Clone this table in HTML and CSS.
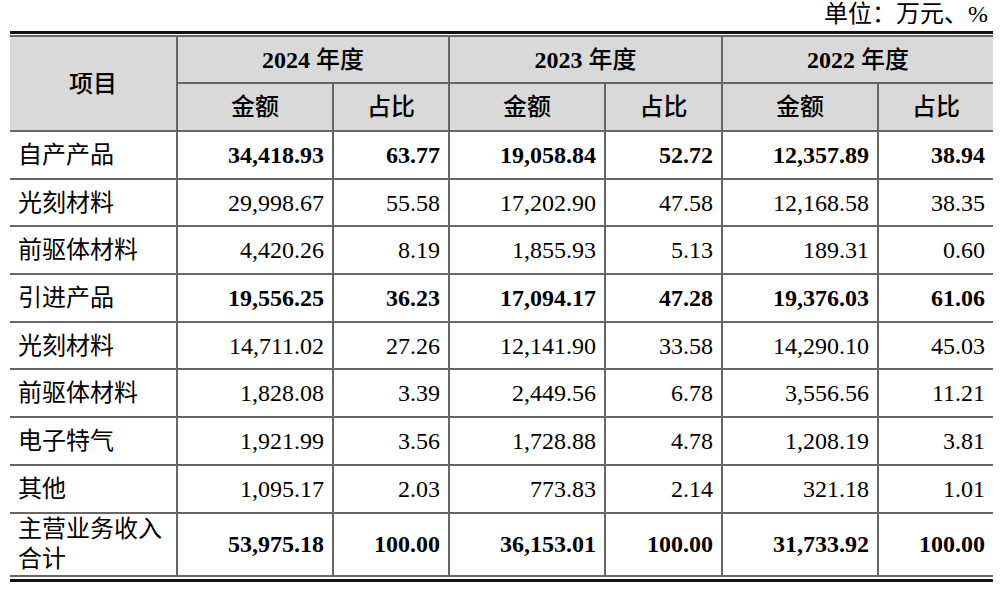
FILE: index.html
```html
<!DOCTYPE html>
<html lang="zh">
<head>
<meta charset="utf-8">
<link rel="stylesheet" href="styles.css">
</head>
<body>
<div class="page">
  <div class="unit">单位：万元、%</div>
  <div class="frame">
    <table class="data">
      <colgroup>
        <col class="c-item"><col class="c-amt"><col class="c-pct"><col class="c-amt"><col class="c-pct2"><col class="c-amt"><col class="c-pct3">
      </colgroup>
      <thead>
        <tr class="h1">
          <th rowspan="2"><span class="cj">项目</span></th>
          <th colspan="2">2024 <span class="cj">年度</span></th>
          <th colspan="2">2023 <span class="cj">年度</span></th>
          <th colspan="2">2022 <span class="cj">年度</span></th>
        </tr>
        <tr class="h2">
          <th><span class="cj">金额</span></th><th><span class="cj">占比</span></th>
          <th><span class="cj">金额</span></th><th><span class="cj">占比</span></th>
          <th><span class="cj">金额</span></th><th><span class="cj">占比</span></th>
        </tr>
      </thead>
      <tbody>
        <tr class="b">
          <td class="lbl">自产产品</td><td>34,418.93</td><td>63.77</td><td>19,058.84</td><td>52.72</td><td>12,357.89</td><td>38.94</td>
        </tr>
        <tr>
          <td class="lbl">光刻材料</td><td>29,998.67</td><td>55.58</td><td>17,202.90</td><td>47.58</td><td>12,168.58</td><td>38.35</td>
        </tr>
        <tr>
          <td class="lbl">前驱体材料</td><td>4,420.26</td><td>8.19</td><td>1,855.93</td><td>5.13</td><td>189.31</td><td>0.60</td>
        </tr>
        <tr class="b">
          <td class="lbl">引进产品</td><td>19,556.25</td><td>36.23</td><td>17,094.17</td><td>47.28</td><td>19,376.03</td><td>61.06</td>
        </tr>
        <tr>
          <td class="lbl">光刻材料</td><td>14,711.02</td><td>27.26</td><td>12,141.90</td><td>33.58</td><td>14,290.10</td><td>45.03</td>
        </tr>
        <tr>
          <td class="lbl">前驱体材料</td><td>1,828.08</td><td>3.39</td><td>2,449.56</td><td>6.78</td><td>3,556.56</td><td>11.21</td>
        </tr>
        <tr>
          <td class="lbl">电子特气</td><td>1,921.99</td><td>3.56</td><td>1,728.88</td><td>4.78</td><td>1,208.19</td><td>3.81</td>
        </tr>
        <tr>
          <td class="lbl">其他</td><td>1,095.17</td><td>2.03</td><td>773.83</td><td>2.14</td><td>321.18</td><td>1.01</td>
        </tr>
        <tr class="b total">
          <td class="lbl">主营业务收入合计</td><td>53,975.18</td><td>100.00</td><td>36,153.01</td><td>100.00</td><td>31,733.92</td><td>100.00</td>
        </tr>
      </tbody>
    </table>
  </div>
</div>
</body>
</html>
```

FILE: styles.css
```css
html, body {
  margin: 0;
  padding: 0;
  background: #fff;
}

body {
  font-family: "Liberation Serif", "Noto Sans CJK SC", serif;
  font-size: 24px;
  color: #000;
}

.page {
  width: 983px;
  margin-left: 10px;
}

.unit {
  height: 31px;
  line-height: 28px;
  text-align: right;
  padding-right: 5px;
  box-sizing: border-box;
}

.frame {
  border-top: 3px solid #111;
  border-bottom: 3px solid #111;
  padding: 1px 0 2px;
}

.data {
  width: 983px;
  table-layout: fixed;
  border-collapse: collapse;
  border-top: 2px solid #333;
  border-bottom: 2px solid #333;
}

.c-item { width: 167px; }
.c-amt { width: 156px; }
.c-pct { width: 116px; }
.c-pct2 { width: 117px; }
.c-pct3 { width: 115px; }

.data th,
.data td {
  border: 2px solid #666;
  padding: 0 8px;
  line-height: 30px;
  overflow: hidden;
}

.data tr > :first-child { border-left: none; }
.data tr > :last-child { border-right: none; }

.data thead th {
  background: #d9d9d9;
  font-weight: bold;
  text-align: center;
}

.data thead th .cj {
  font-weight: 500;
}

.data thead th[rowspan] { border-left: none; }

.data tr.h1 { height: 47px; }
.data tr.h2 { height: 48px; }

.data tbody tr { height: 47.7px; }
.data tbody tr.total { height: 63px; }

.data td {
  text-align: right;
}

.data td.lbl {
  text-align: left;
  font-weight: normal;
}

.data tr.b td { font-weight: bold; }
.data tr.b td.lbl { font-weight: normal; }
```
